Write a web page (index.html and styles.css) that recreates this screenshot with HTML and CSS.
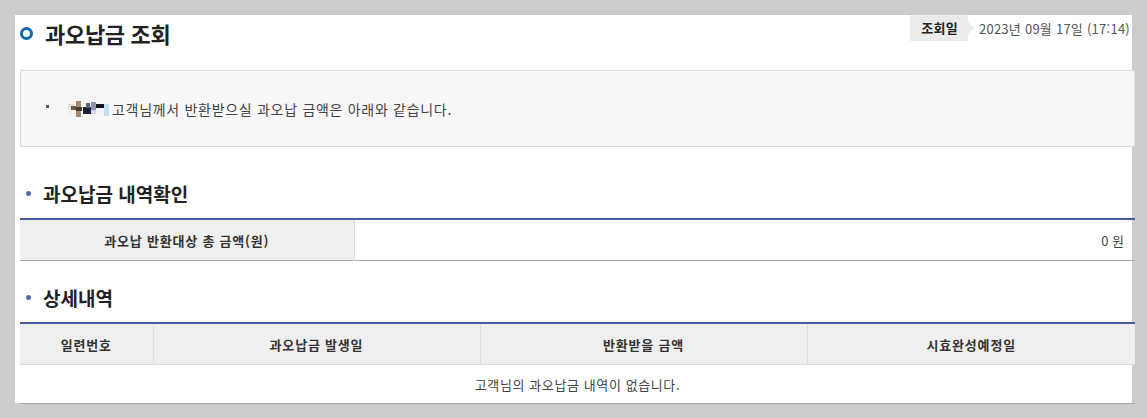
FILE: index.html
```html
<!DOCTYPE html>
<html lang="ko">
<head>
<meta charset="utf-8">
<title>과오납금 조회</title>
<link rel="stylesheet" href="styles.css">
</head>
<body>
<div class="panel">
  <div class="head">
    <h1 class="title"><span class="ring"></span>과오납금 조회</h1>
    <div class="meta">
      <span class="meta-label">조회일</span>
      <span class="meta-date">2023년 09월 17일 (17:14)</span>
    </div>
  </div>

  <div class="info">
    <span class="sq"></span>
    <svg class="blur" width="44" height="17" viewBox="0 0 44 17">
      <rect x="0" y="4" width="6" height="5" fill="#e9dfd6"/>
      <rect x="3" y="6" width="5" height="4" fill="#6b5a4a"/>
      <rect x="8" y="1" width="5" height="16" fill="#a88a70"/>
      <rect x="8" y="7" width="6" height="4" fill="#4a3a2e"/>
      <rect x="15" y="7" width="8" height="7" fill="#1a1f33"/>
      <rect x="18" y="3" width="4" height="5" fill="#5d6276"/>
      <rect x="23" y="2" width="5" height="8" fill="#8d93aa"/>
      <rect x="23" y="10" width="5" height="4" fill="#d4d8e6"/>
      <rect x="28" y="4" width="8" height="4" fill="#101420"/>
      <rect x="36" y="4" width="5" height="12" fill="#c8dcef"/>
      <rect x="0" y="11" width="5" height="5" fill="#f1ede8"/>
      <rect x="29" y="9" width="6" height="6" fill="#f0f2f6"/>
    </svg>
    <span class="info-text">고객님께서 반환받으실 과오납 금액은 아래와 같습니다.</span>
  </div>

  <h2 class="sec sec-first"><span class="dot"></span>과오납금 내역확인</h2>
  <table class="tbl sum">
    <colgroup>
      <col class="s1">
      <col class="s2">
    </colgroup>
    <tr>
      <th class="sum-th">과오납 반환대상 총 금액(원)</th>
      <td class="sum-td">0 원</td>
    </tr>
  </table>

  <h2 class="sec sec-second"><span class="dot"></span>상세내역</h2>
  <table class="tbl detail">
    <colgroup>
      <col class="c1">
      <col class="c2">
      <col class="c3">
      <col class="c4">
    </colgroup>
    <thead>
      <tr>
        <th>일련번호</th>
        <th>과오납금 발생일</th>
        <th>반환받을 금액</th>
        <th class="last">시효완성예정일</th>
      </tr>
    </thead>
    <tbody>
      <tr>
        <td class="empty" colspan="4">고객님의 과오납금 내역이 없습니다.</td>
      </tr>
    </tbody>
  </table>
</div>
</body>
</html>
```

FILE: styles.css
```css
html, body {
  margin: 0;
  padding: 0;
}
body {
  background: #cccccc;
  font-family: "Noto Sans CJK KR", "Noto Sans", sans-serif;
  color: #333;
  width: 1147px;
  height: 418px;
  overflow: hidden;
}
.panel {
  margin: 15px 0 0 15px;
  width: 1117px;
  height: 388px;
  background: #fff;
  padding-left: 5px;
  box-sizing: border-box;
}
.head {
  display: flex;
  justify-content: space-between;
  align-items: flex-start;
  height: 55px;
}
.title {
  margin: 0;
  display: flex;
  align-items: center;
  height: 36px;
  font-size: 22px;
  font-weight: 700;
  color: #222;
  letter-spacing: -0.3px;
}
.ring {
  width: 13px;
  height: 13px;
  box-sizing: border-box;
  border: 3.5px solid #0a68b4;
  border-radius: 50%;
  margin-right: 12px;
  flex: none;
}
.meta {
  display: flex;
  align-items: center;
  height: 26px;
  margin-right: 2px;
}
.meta-label {
  position: relative;
  display: block;
  height: 26px;
  line-height: 26px;
  background: #ebebeb;
  padding: 0 10px 0 11px;
  font-size: 13px;
  font-weight: 700;
  color: #222;
  letter-spacing: 0.3px;
}
.meta-label::after {
  content: "";
  position: absolute;
  right: -6px;
  top: 7px;
  border-left: 6px solid #ebebeb;
  border-top: 6px solid transparent;
  border-bottom: 6px solid transparent;
}
.meta-date {
  margin-left: 11px;
  font-size: 13px;
  color: #555;
  letter-spacing: 0.25px;
}
.info {
  width: 1115px;
  height: 77px;
  box-sizing: border-box;
  border: 1px solid #dcdcdc;
  background: #f7f7f7;
  display: flex;
  align-items: center;
  padding-left: 25px;
}
.sq {
  width: 3px;
  height: 3px;
  background: #555;
  margin-right: 19px;
  margin-top: -4px;
  flex: none;
}
.blur {
  display: block;
  flex: none;
  margin-right: 0;
}
.info-text {
  font-size: 14px;
  color: #444;
  letter-spacing: 0.7px;
}
.sec {
  margin: 0;
  display: flex;
  align-items: center;
  height: 26px;
  font-size: 19px;
  font-weight: 700;
  color: #222;
  margin-bottom: 12px;
}
.sec-first {
  margin-top: 33px;
}
.sec-second {
  margin-top: 23px;
}
.dot {
  width: 5px;
  height: 5px;
  border-radius: 50%;
  background: #5a68a8;
  margin: 0 12px 0 6px;
  flex: none;
}
.tbl {
  width: 1115px;
  border-collapse: collapse;
  border-top: 2px solid #4a5b9b;
  font-size: 13px;
  table-layout: fixed;
}
.tbl th {
  font-weight: 700;
  color: #333;
  background: #efefef;
  padding: 0;
  text-align: center;
  letter-spacing: 0.8px;
}
.s1 { width: 334px; }
.s2 { width: 781px; }
.sum {
  border-bottom: 1px solid #aaaaaa;
}
.sum-th {
  height: 40px;
  border-right: 1px solid #dddddd;
}
.sum-td {
  height: 40px;
  text-align: right;
  padding: 0 11px 0 0;
  color: #444;
}
.detail {
  border-bottom: 1px solid #aaaaaa;
}
.detail thead th {
  height: 40px;
  border-bottom: 1px solid #dddddd;
  border-right: 1px solid #dddddd;
}
.detail thead th.last {
  border-right: none;
}
.c1 { width: 133px; }
.c2 { width: 327px; }
.c3 { width: 327px; }
.c4 { width: 328px; }
.empty {
  height: 38px;
  padding: 0;
  text-align: center;
  color: #444;
  letter-spacing: 0.6px;
}
```
